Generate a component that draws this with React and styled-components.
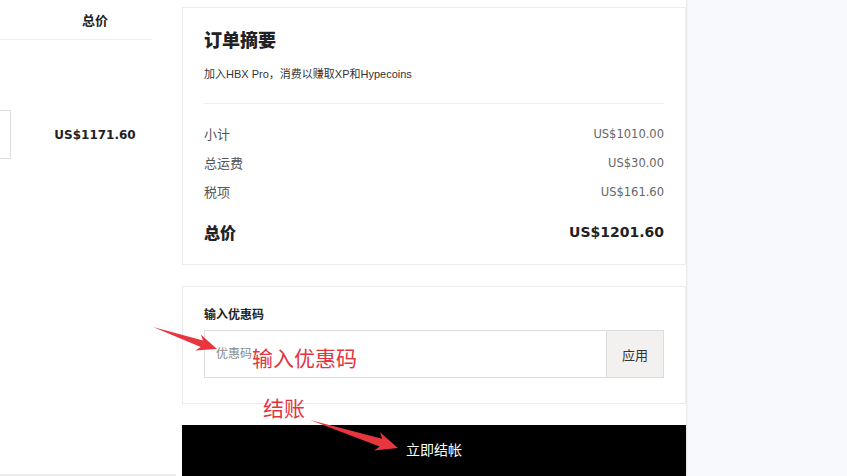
import React from 'react';
import styled, { createGlobalStyle } from 'styled-components';

const GlobalStyle = createGlobalStyle`
  html, body {
    margin: 0;
    padding: 0;
  }
  body {
    background: #f8f9fc;
    font-family: "Liberation Sans", "Noto Sans CJK SC", sans-serif;
    color: #222;
  }
`;

const Page = styled.div`
  position: relative;
  display: flex;
  width: 847px;
  height: 476px;
  overflow: hidden;
  background: #f8f9fc;
`;

const Main = styled.div`
  display: flex;
  width: 686px;
  height: 100%;
  flex-shrink: 0;
  background: #fff;
  box-shadow: 1px 0 2px rgba(0, 0, 0, 0.08);
`;

const CartCol = styled.div`
  width: 176px;
  margin-right: 6px;
  flex-shrink: 0;
  box-sizing: border-box;
  border-bottom: 2px solid #ececec;
`;

const CartHeader = styled.div`
  width: 152px;
  height: 40px;
  box-sizing: border-box;
  padding-left: 38px;
  border-bottom: 1px solid #eee;
  display: flex;
  align-items: center;
  justify-content: center;
  font-size: 13px;
  font-weight: 700;
  color: #222;
`;

const ItemRow = styled.div`
  display: flex;
  align-items: center;
  height: 49px;
  margin-top: 70px;
`;

const QtyEdge = styled.div`
  width: 11px;
  height: 49px;
  box-sizing: border-box;
  border: 1px solid #ddd;
  border-left: none;
`;

const ItemPrice = styled.div`
  width: 141px;
  box-sizing: border-box;
  padding-left: 27px;
  text-align: center;
  font-family: "DejaVu Sans", sans-serif;
  font-size: 12px;
  font-weight: 700;
  color: #222;
`;

const SummaryCol = styled.div`
  width: 504px;
  padding-top: 7px;
  display: flex;
  flex-direction: column;
  gap: 21px;
`;

const Card = styled.div`
  border: 1px solid #ececec;
  padding: ${(p) => p.$pad};
  background: #fff;
`;

const Title = styled.h2`
  margin: 0;
  font-size: 18px;
  line-height: 24px;
  font-weight: 900;
  color: #222;
`;

const Subtitle = styled.p`
  margin: 13px 0 0;
  font-size: 11px;
  line-height: 16px;
  color: #333;
`;

const Divider = styled.div`
  height: 1px;
  margin-top: 21px;
  background: #eee;
`;

const Lines = styled.div`
  margin-top: 15px;
`;

const Line = styled.div`
  display: flex;
  justify-content: space-between;
  align-items: center;
  height: ${(p) => (p.$total ? '24px' : '29px')};
  margin-top: ${(p) => (p.$total ? '14px' : '0')};
`;

const Label = styled.span`
  font-size: ${(p) => (p.$total ? '16px' : '13px')};
  font-weight: ${(p) => (p.$total ? 900 : 400)};
  color: ${(p) => (p.$total ? '#222' : '#555')};
`;

const Amount = styled.span`
  font-family: "DejaVu Sans", sans-serif;
  font-size: ${(p) => (p.$total ? '14px' : '11.5px')};
  font-weight: ${(p) => (p.$total ? 700 : 400)};
  color: ${(p) => (p.$total ? '#222' : '#666')};
`;

const CouponLabel = styled.div`
  font-size: 12px;
  line-height: 16px;
  font-weight: 700;
  color: #222;
`;

const CouponBox = styled.div`
  display: flex;
  height: 48px;
  margin-top: 7px;
  box-sizing: border-box;
  border: 1px solid #ddd;
`;

const CouponInput = styled.input`
  flex: 1;
  min-width: 0;
  border: none;
  outline: none;
  padding: 0 0 0 11px;
  font-family: "Liberation Sans", "Noto Sans CJK SC", sans-serif;
  font-size: 12px;
  color: #333;
  background: #fff;

  &::placeholder {
    color: #888;
  }
`;

const ApplyButton = styled.button`
  width: 57px;
  border: none;
  border-left: 1px solid #ddd;
  background: #f2f1ef;
  font-family: "Liberation Sans", "Noto Sans CJK SC", sans-serif;
  font-size: 13px;
  color: #333;
  cursor: pointer;
`;

const CheckoutButton = styled.button`
  height: 52px;
  padding: 0 0 4px;
  border: none;
  background: #000;
  color: #fff;
  font-family: "Liberation Sans", "Noto Sans CJK SC", sans-serif;
  font-size: 14px;
  cursor: pointer;
`;

const Overlay = styled.svg`
  position: absolute;
  left: 0;
  top: 0;
  pointer-events: none;
`;

const Note = styled.span`
  position: absolute;
  left: ${(p) => p.$x}px;
  top: ${(p) => p.$y}px;
  font-family: "Noto Sans CJK SC", sans-serif;
  font-size: 21px;
  line-height: 24px;
  color: #e2353f;
  white-space: nowrap;
`;

// tapered annotation arrow: point at the tail, widening shaft, swept-back head
const arrowPoints = (x1, y1, x2, y2, head, headW, shaftW) => {
  const dx = x2 - x1;
  const dy = y2 - y1;
  const len = Math.hypot(dx, dy);
  const ux = dx / len;
  const uy = dy / len;
  const nx = -uy;
  const ny = ux;
  const bx = x2 - ux * head;
  const by = y2 - uy * head;
  const wx = x2 - ux * (head + 4);
  const wy = y2 - uy * (head + 4);
  const pts = [
    [x1, y1],
    [bx + (nx * shaftW) / 2, by + (ny * shaftW) / 2],
    [wx + (nx * headW) / 2, wy + (ny * headW) / 2],
    [x2, y2],
    [wx - (nx * headW) / 2, wy - (ny * headW) / 2],
    [bx - (nx * shaftW) / 2, by - (ny * shaftW) / 2],
  ];
  return pts.map((p) => p.map((v) => v.toFixed(1)).join(',')).join(' ');
};

const lines = [
  { label: '小计', amount: 'US$1010.00' },
  { label: '总运费', amount: 'US$30.00' },
  { label: '税项', amount: 'US$161.60' },
];

const App = () => {
  return (
    <Page>
      <GlobalStyle />
      <Main>
        <CartCol>
          <CartHeader>总价</CartHeader>
          <ItemRow>
            <QtyEdge />
            <ItemPrice>US$1171.60</ItemPrice>
          </ItemRow>
        </CartCol>

        <SummaryCol>
          <Card $pad="21px 21px 20px">
            <Title>订单摘要</Title>
            <Subtitle>加入HBX Pro，消费以赚取XP和Hypecoins</Subtitle>
            <Divider />
            <Lines>
              {lines.map((l) => (
                <Line key={l.label}>
                  <Label>{l.label}</Label>
                  <Amount>{l.amount}</Amount>
                </Line>
              ))}
              <Line $total>
                <Label $total>总价</Label>
                <Amount $total>US$1201.60</Amount>
              </Line>
            </Lines>
          </Card>

          <Card $pad="20px 21px 25px">
            <CouponLabel>输入优惠码</CouponLabel>
            <CouponBox>
              <CouponInput placeholder="优惠码" />
              <ApplyButton>应用</ApplyButton>
            </CouponBox>
          </Card>

          <CheckoutButton>立即结帐</CheckoutButton>
        </SummaryCol>
      </Main>

      {/* red annotations drawn over the page */}
      <Overlay width="847" height="476">
        <polygon points={arrowPoints(153, 327, 217, 349, 16, 17, 7)} fill="#e8363f" />
        <polygon points={arrowPoints(310, 420, 398, 448, 18, 19, 8)} fill="#e8363f" />
      </Overlay>
      <Note $x={252} $y={345}>输入优惠码</Note>
      <Note $x={263} $y={395}>结账</Note>
    </Page>
  );
};

export default App;
